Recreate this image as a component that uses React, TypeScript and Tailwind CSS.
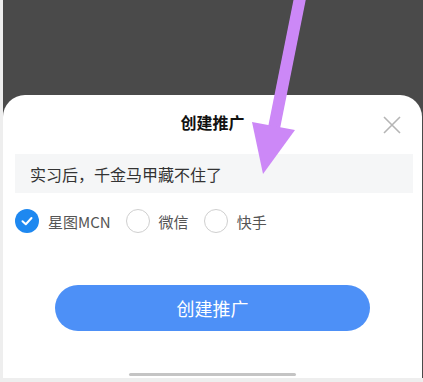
import React from "react";

const font = '"Noto Sans CJK SC", "Noto Sans", sans-serif';

function Radio({ checked, label }: { checked?: boolean; label: string }) {
  return (
    <div className="flex items-center">
      {checked ? (
        <div className="w-[24px] h-[24px] rounded-full bg-[#1e88f0] flex items-center justify-center">
          <svg width="14" height="14" viewBox="0 0 14 14" fill="none">
            <path d="M2.5 7.2 L5.8 10.2 L11.5 4" stroke="white" strokeWidth="2" strokeLinecap="round" strokeLinejoin="round" />
          </svg>
        </div>
      ) : (
        <div className="w-[24px] h-[24px] rounded-full border border-[#cfcfcf] bg-white" />
      )}
      <span className="ml-[9px] text-[15px] text-[#555555] leading-none">{label}</span>
    </div>
  );
}

export default function App() {
  return (
    <div
      className="relative w-[423px] h-[382px] bg-[#eeeeee] pl-[3px] pb-[4px] flex overflow-hidden"
      style={{ fontFamily: font }}
    >
      <div className="flex-1 flex flex-col bg-[#4a4a4a]">
        <div className="h-[95px] shrink-0" />
        <div className="flex-1 bg-white rounded-t-[22px] mr-[1px] flex flex-col relative">
          <div className="h-[56px] flex items-center justify-center relative">
            <span className="text-[16px] font-bold text-[#111111] mt-[-3px]">创建推广</span>
            <svg
              className="absolute left-[380px] top-[21px]"
              width="18"
              height="18"
              viewBox="0 0 18 18"
            >
              <path d="M1 1 L17 17 M17 1 L1 17" stroke="#b5b5b5" strokeWidth="1.6" />
            </svg>
          </div>
          <div className="ml-[12px] mr-[9px] mt-[3px] h-[39px] bg-[#f5f6f7] flex items-center pl-[15px]">
            <span className="text-[16px] text-[#333333]">实习后，千金马甲藏不住了</span>
          </div>
          <div className="ml-[12px] mt-[16px] flex items-center gap-[15px]">
            <Radio checked label="星图MCN" />
            <Radio label="微信" />
            <Radio label="快手" />
          </div>
          <div className="mt-[52px] ml-[52px] w-[315px] h-[46px] rounded-full bg-[#4d90f7] flex items-center justify-center">
            <span className="text-[18px] text-white">创建推广</span>
          </div>
          <div className="absolute left-[126px] bottom-[2px] w-[167px] h-[3px] rounded-full bg-[#c4c4c4]" />
        </div>
      </div>
      <svg className="absolute left-0 top-0" width="423" height="382" viewBox="0 0 423 382">
        <line x1="300" y1="-2" x2="274" y2="128" stroke="#cc88f7" strokeWidth="12" />
        <polygon points="252,122 295,130 263,174" fill="#cc88f7" />
      </svg>
    </div>
  );
}
